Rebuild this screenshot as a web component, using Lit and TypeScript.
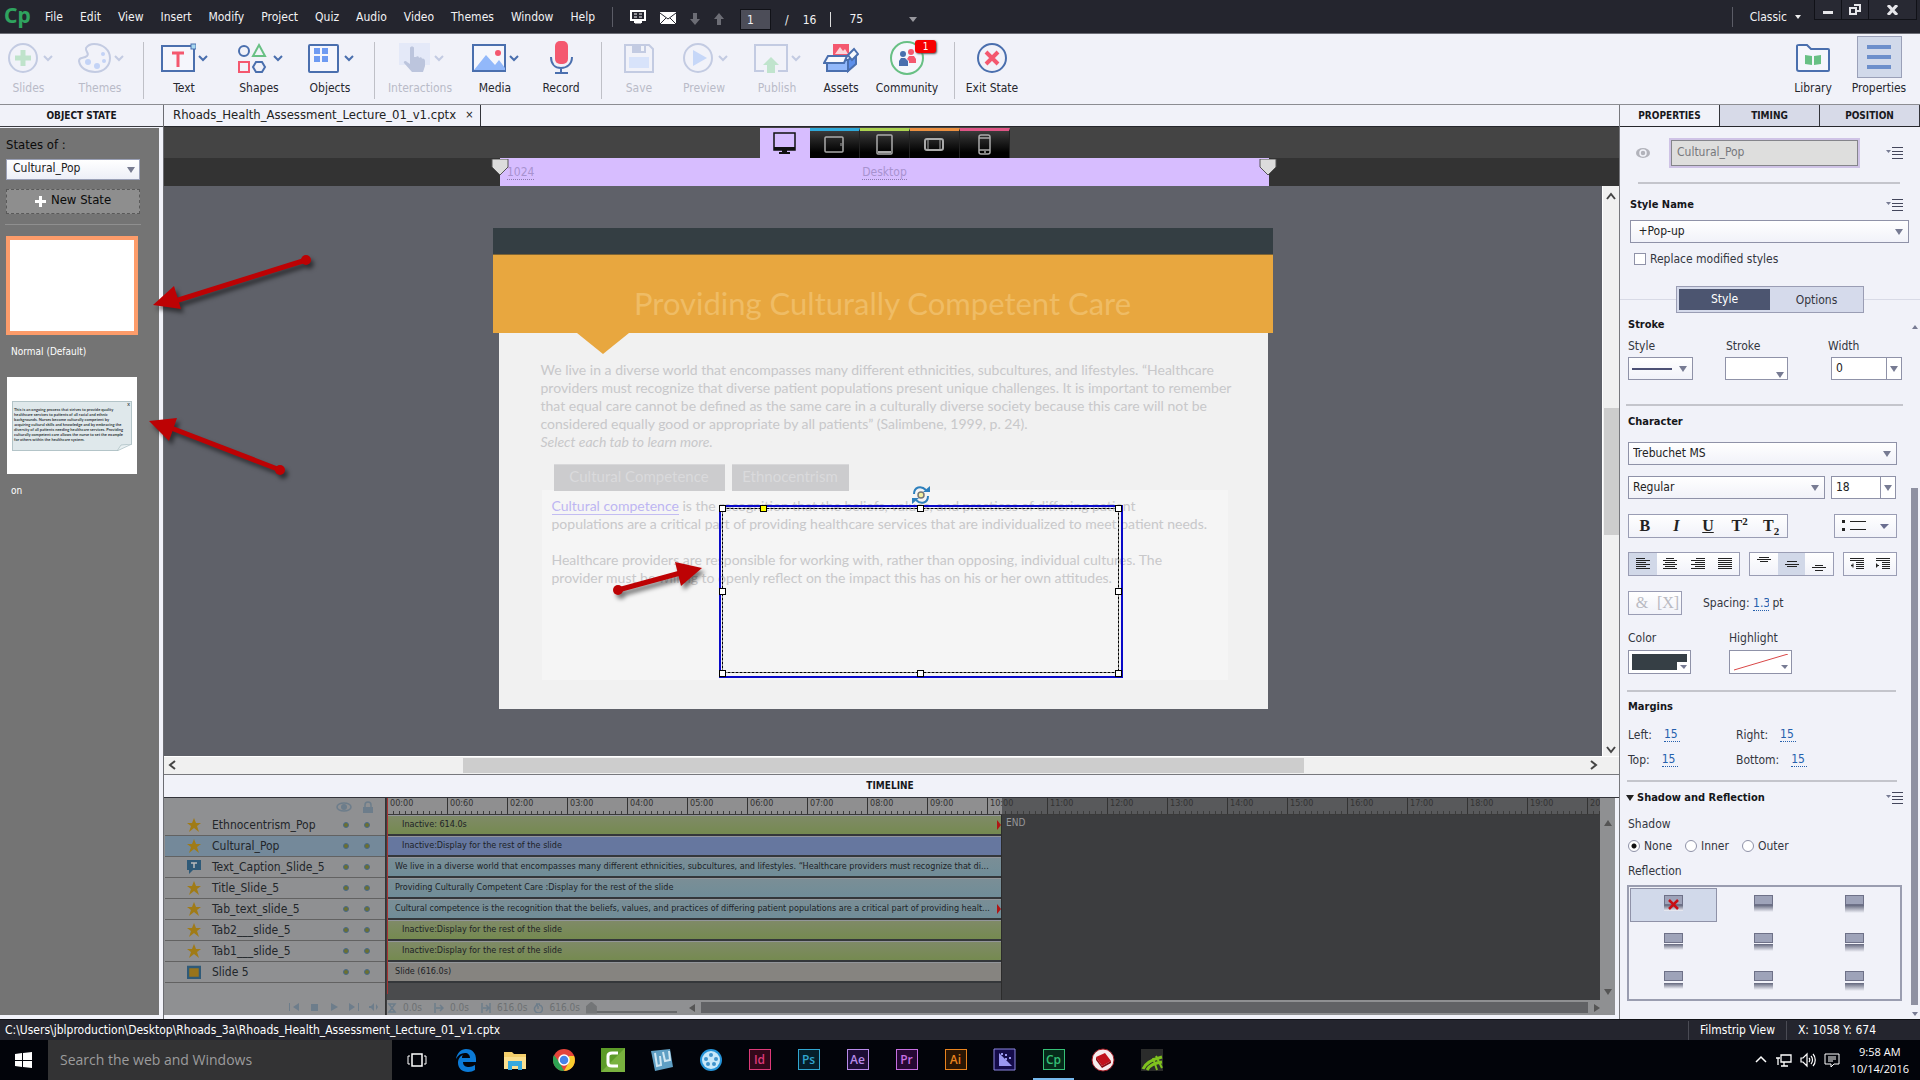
import { LitElement, html, svg, css, nothing } from "lit";
import { customElement } from "lit/decorators.js";
import { classMap } from "lit/directives/class-map.js";

const BLUE = "#4a6fae";
const RED = "#f4586f";
const GREEN = "#68c084";

const icons: Record<string, unknown> = {
  slides: svg`<circle cx="18" cy="18" r="14" fill="none" stroke="#c3cbe2" stroke-width="2"/><path d="M18 10v16M10 18h16" stroke="#bfe3cb" stroke-width="5"/>`,
  themes: svg`<path d="M10 8c-1 4 4 5 1 8-3 3-8 0-8 5 1 7 8 11 16 11 9 0 15-6 15-14S27 4 18 4c-3 0-6 1-8 4z" fill="none" stroke="#c3cbe2" stroke-width="2"/><circle cx="12" cy="22" r="3" fill="#c3d3f6"/><circle cx="21" cy="26" r="3" fill="#c3d3f6"/><circle cx="28" cy="21" r="2" fill="#c3d3f6"/><circle cx="27" cy="14" r="2" fill="#c3d3f6"/>`,
  text: svg`<rect x="2" y="6" width="32" height="25" fill="#f5f6fc" stroke="${BLUE}" stroke-width="2"/><path d="M12 13h12M18 13v14" stroke="${RED}" stroke-width="3" fill="none"/><rect x="31" y="4" width="5" height="5" fill="#a8d8f0" stroke="${BLUE}"/>`,
  shapes: svg`<g fill="none" stroke-width="2"><circle cx="9" cy="11" r="5" stroke="${BLUE}"/><path d="M24 5l6 11H18z" stroke="${GREEN}"/><rect x="4" y="22" width="10" height="10" stroke="${RED}"/><path d="M21 22h6l3 5-3 5h-6l-3-5z" stroke="${BLUE}"/></g>`,
  objects: svg`<rect x="3" y="5" width="29" height="27" rx="1" fill="#f5f6fc" stroke="${BLUE}" stroke-width="2"/><path d="M8 8h6v6H8zM16 8h6v6h-6zM8 16h6v6H8zM16 16h6v6h-6z" fill="#6e9bf2"/>`,
  interactions: svg`<rect x="3" y="3" width="31" height="22" fill="#e4e9f8"/><path d="M14 8c0-2 4-2 4 0v9h2c1-1 3-1 3 1 1-1 3-1 3 1 1-1 3 0 3 2v5l-2 6H16l-8-9c-1-2 2-3 3-1l3 2z" fill="#bcc5dd"/>`,
  media: svg`<rect x="2" y="5" width="32" height="26" fill="#f5f6fc" stroke="${BLUE}" stroke-width="2"/><path d="M3 30l12-15 9 10 4-5 6 8v2z" fill="#92b8fa"/><circle cx="27" cy="13" r="3" fill="${RED}"/>`,
  record: svg`<rect x="12" y="1" width="13" height="23" rx="5" fill="${RED}"/><path d="M8 17c0 7 4 11 10 11s11-4 11-11M18 28v5M12 33h13" fill="none" stroke="${BLUE}" stroke-width="2"/>`,
  save: svg`<path d="M4 5h24l4 4v23H4z" fill="none" stroke="#c3cbe2" stroke-width="2"/><path d="M11 5h14v8H11z" fill="#c3cbe2"/><path d="M20 6h3v5h-3z" fill="#f1f3f9"/><rect x="8" y="17" width="20" height="11" fill="#d8e3fa"/>`,
  preview: svg`<circle cx="18" cy="18" r="14" fill="none" stroke="#c3cbe2" stroke-width="2"/><path d="M13 10l14 8-14 8z" fill="#c6d7f8"/>`,
  publish: svg`<path d="M11 31H2V5h32v26h-9" fill="none" stroke="#c3cbe2" stroke-width="2"/><path d="M18 17l8 8h-4v8h-8v-8h-4z" fill="#c0e4cd"/>`,
  assets: svg`<path d="M10 4h16v13H10z" fill="${RED}"/><path d="M12 14l5-7 3 4 2-2 3 5z" fill="#fbd5db"/><path d="M4 20h21v11H4z" fill="#92b8fa" stroke="${BLUE}" stroke-width="2"/><path d="M25 20l8-6v10l-8 7z" fill="#5d8fea" stroke="${BLUE}" stroke-width="2"/><path d="M1 23l4-7h19l-3 7z" fill="#f8f9fd" stroke="${BLUE}" stroke-width="2"/><path d="M25 15l6-6 4 5-6 6z" fill="#f8f9fd" stroke="${BLUE}" stroke-width="2"/>`,
  community: svg`<circle cx="18" cy="18" r="16" fill="#f5f6fc" stroke="${GREEN}" stroke-width="2"/><circle cx="14" cy="14" r="3" fill="${BLUE}"/><path d="M10 26v-5l2-3h4l3 3v5z" fill="${BLUE}"/><circle cx="22" cy="12" r="3" fill="${RED}"/><path d="M20 23v-2l-2-2 2-3h5l2 3v4z" fill="${RED}"/>`,
  exit: svg`<circle cx="18" cy="18" r="14" fill="none" stroke="${BLUE}" stroke-width="2"/><path d="M12 12l12 12M24 12L12 24" stroke="${RED}" stroke-width="4"/>`,
  library: svg`<path d="M2 6c0-1 1-1 2-1h8l4 4h17c1 0 1 1 1 1v20c0 1 0 1-1 1H4c-2 0-2-1-2-2z" fill="#f5f6fc" stroke="${BLUE}" stroke-width="2"/><path d="M10 15l7 1v9l-7-1zM26 15l-7 1v9l7-1z" fill="${GREEN}"/>`,
  properties: svg`<path d="M6 8h24M6 18h24M6 28h24" stroke="#6d8fcb" stroke-width="4"/>`,
};

interface Tool { icon: string; label: string; width: number; menu?: boolean; off?: boolean; badge?: string }
const toolGroups: Tool[][] = [
  [
    { icon: "slides", label: "Slides", width: 57, menu: true, off: true },
    { icon: "themes", label: "Themes", width: 86, menu: true, off: true },
  ],
  [
    { icon: "text", label: "Text", width: 80, menu: true },
    { icon: "shapes", label: "Shapes", width: 70, menu: true },
    { icon: "objects", label: "Objects", width: 72, menu: true },
  ],
  [
    { icon: "interactions", label: "Interactions", width: 90, menu: true, off: true },
    { icon: "media", label: "Media", width: 60, menu: true },
    { icon: "record", label: "Record", width: 72 },
  ],
  [
    { icon: "save", label: "Save", width: 74, off: true },
    { icon: "preview", label: "Preview", width: 56, menu: true, off: true },
    { icon: "publish", label: "Publish", width: 90, menu: true, off: true },
    { icon: "assets", label: "Assets", width: 38 },
    { icon: "community", label: "Community", width: 94, badge: "1" },
  ],
  [{ icon: "exit", label: "Exit State", width: 74 }],
];

const chevron = html`<svg class="chev" width="10" height="8" viewBox="0 0 10 8"><path d="M1 2l4 4 4-4" fill="none" stroke="currentColor" stroke-width="2"/></svg>`;

const baseStyles = css`
  * { box-sizing: border-box; }
  button, input, select { font: inherit; color: inherit; margin: 0; padding: 0; border: 0; background: none; border-radius: 0; outline: none; text-align: inherit; }
  button { text-align: center; }
  select { appearance: none; width: 100%; height: 100%; }
  svg { display: block; flex: none; }
  a { color: inherit; text-decoration: none; }
`;

@customElement("cp-menubar")
class CpMenubar extends LitElement {
  static styles = [baseStyles, css`
    :host { display: flex; align-items: center; height: 34px; background: #24252e; color: #f2f2f4; border-bottom: 1px solid #6d6e76; position: relative; }
    .logo { width: 40px; padding-left: 4px; font: 700 21px/28px "Noto Sans", "Open Sans", sans-serif; color: #2fa35f; padding-bottom: 4px; }
    .menus { display: flex; gap: 17px; padding-left: 5px; }
    .sep { width: 1px; height: 20px; background: #5b5c66; margin: 0 17px; }
    .tools { display: flex; align-items: center; gap: 14px; }
    .page { width: 31px; height: 21px; background: #4c4d58; border: 1px solid #111218; padding-left: 6px; margin: 6px 0 0 2px; }
    .count { display: flex; gap: 14px; margin: 6px 0 0; }
    .bar { width: 1px; height: 15px; background: #ddd; margin: 6px 4px 0 0; }
    .zoom { width: 70px; height: 20px; margin-top: 5px; position: relative; }
    .zoom::after, .caret { content: ""; border: 4px solid transparent; border-top: 5px solid #98989e; border-bottom: 0; }
    .zoom::after { position: absolute; right: 2px; top: 8px; pointer-events: none; }
    .grow { flex: 1; }
    .mode { display: flex; align-items: center; gap: 8px; padding-right: 13px; }
    .caret { border-top-color: #eee; border-width: 4px 3px 0; }
    .win { display: flex; align-self: flex-start; height: 20px; border: 1px solid #101117; border-top: 0; margin-right: 3px; background: #282933; }
    .win button { width: 27px; display: grid; place-items: center; border-right: 1px solid #101117; }
    .win button:last-child { width: 47px; border: 0; }
  `];
  render() {
    const menus = ["File", "Edit", "View", "Insert", "Modify", "Project", "Quiz", "Audio", "Video", "Themes", "Window", "Help"];
    return html`
      <div class="logo">Cp</div>
      <nav class="menus">${menus.map((m) => html`<button>${m}</button>`)}</nav>
      <span class="sep"></span>
      <div class="tools">
        <button aria-label="Preview device"><svg width="16" height="14" viewBox="0 0 16 14"><path d="M1 1h14v9H1z" fill="none" stroke="#fff" stroke-width="2"/><path d="M4 4h3M9 4h3M4 7h3M9 7h3M5 13h6" stroke="#fff" stroke-width="1"/><path d="M4 10h8v3H4z" fill="#fff"/></svg></button>
        <button aria-label="Mail"><svg width="16" height="14" viewBox="0 0 16 14"><path d="M0 2h16v12H0z" fill="#fff"/><path d="M0 3l8 6 8-6M0 14l6-6M16 14l-6-6" fill="none" stroke="#24252e"/></svg></button>
        <button aria-label="Next slide"><svg width="10" height="16" viewBox="0 0 10 16"><path d="M3 4h4v6h3l-5 6-5-6h3z" fill="#6c6d75"/></svg></button>
        <button aria-label="Previous slide"><svg width="10" height="16" viewBox="0 0 10 16"><path d="M3 16h4v-6h3L5 4l-5 6h3z" fill="#6c6d75"/></svg></button>
        <input class="page" aria-label="Slide number" value="1">
        <span class="count"><span>/</span><span>16</span></span>
        <span class="bar"></span>
        <div class="zoom"><select aria-label="Zoom"><option>75</option></select></div>
      </div>
      <span class="grow"></span>
      <span class="sep"></span>
      <button class="mode">Classic <span class="caret"></span></button>
      <div class="win">
        <button aria-label="Minimize"><svg width="10" height="10" viewBox="0 0 10 10"><path d="M0 6h10v3H0z" fill="#e6e6ea"/></svg></button>
        <button aria-label="Restore"><svg width="12" height="11" viewBox="0 0 12 11"><path d="M5 1h6v6H8M1 4h6v6H1z" fill="none" stroke="#e6e6ea" stroke-width="2"/></svg></button>
        <button aria-label="Close"><svg width="11" height="10" viewBox="0 0 11 10"><path d="M1 0l9 10M10 0L1 10" stroke="#e6e6ea" stroke-width="3"/></svg></button>
      </div>`;
  }
}

@customElement("cp-toolbar")
class CpToolbar extends LitElement {
  static styles = [baseStyles, css`
    :host { display: flex; height: 71px; background: #f1f2f9; border-bottom: 1px solid #8c8d92; color: #26272e; padding-top: 6px; }
    .group { display: flex; margin: 2px 0 5px; }
    .group + .group { border-left: 1px solid #bfc0c7; }
    .group:nth-child(2) { padding-right: 8px; }
    .group:nth-child(3) { padding-right: 4px; }
    .tool { display: flex; flex-direction: column; align-items: center; height: 56px; white-space: nowrap; padding: 0; position: relative; }
    .icon { display: flex; align-items: center; justify-content: center; gap: 2px; height: 36px; margin-bottom: 4px; margin-top: -2px; }
    .chev { color: #4a6fae; }
    .label { line-height: 16px; }
    .off { color: #b9bbc8; }
    .off .chev { color: #c3cbe2; }
    .grow { flex: 1; }
    .wide { width: 66px; }
    .right { padding-right: 8px; }
    .group.right { border: 0; }
    .sel .icon { background: #d1d9ea; border: 1px solid #9aa0b8; width: 45px; height: 42px; margin: -6px 0 2px; }
    .badge { position: absolute; right: 18px; top: -2px; width: 21px; height: 13px; border-radius: 3px; background: #f70000; color: #fff; font-size: 10px; line-height: 13px; box-shadow: 1px 1px 2px #555; }
  `];
  icon(name: string) {
    return html`<svg width="36" height="36" viewBox="0 0 36 36">${icons[name]}</svg>`;
  }
  render() {
    return html`
      ${toolGroups.map((g) => html`<div class="group">${g.map((t) => html`
        <button class=${classMap({ tool: true, off: !!t.off })} style="width:${t.width}px">
          <span class="icon">${this.icon(t.icon)}${t.menu ? chevron : nothing}</span>
          <span class="label">${t.label}</span>
          ${t.badge ? html`<span class="badge">${t.badge}</span>` : nothing}
        </button>`)}</div>`)}
      <span class="grow"></span>
      <div class="group right">
        <button class="tool wide"><span class="icon">${this.icon("library")}</span><span class="label">Library</span></button>
        <button class="tool wide sel"><span class="icon">${this.icon("properties")}</span><span class="label">Properties</span></button>
      </div>`;
  }
}

@customElement("cp-states")
class CpStates extends LitElement {
  static styles = [baseStyles, css`
    :host { display: flex; flex-direction: column; width: 164px; border-right: 1px solid #6b6c72; background: #f1f2f9; position: relative; }
    .head { height: 22px; font-weight: 700; font-size: 10px; line-height: 21px; text-align: center; color: #17181c; border-bottom: 1px solid #3b3c42; margin-bottom: 1px; }
    .body { flex: 1; margin: 0 4px 4px 0; background: #747474; padding: 6px 0 0 6px; color: #0b0b0b; }
    .of { line-height: 22px; display: block; font-size: 13px; }
    .pick { position: relative; width: 134px; height: 21px; margin-top: 3px; background: linear-gradient(#fff, #edeff7); border: 1px solid #9aa0b6; color: #222; }
    .pick select { padding: 0 0 3px 6px; }
    .pick::after { content: ""; position: absolute; right: 4px; top: 7px; border: 4px solid transparent; border-top: 6px solid #777b90; border-bottom: 0; pointer-events: none; }
    .new { display: flex; width: 134px; height: 25px; margin-top: 9px; align-items: center; justify-content: center; gap: 5px; background: #8e8e8e; border: 1px dashed #5a5a5a; font-size: 13px; line-height: 20px; padding-bottom: 3px; }
    .new svg { margin-top: 3px; }
    .rule { width: 136px; height: 1px; background: #8f8f8f; margin: 10px 0 11px -1px; }
    .thumb { display: block; width: 132px; height: 99px; background: #fff; border: 4px solid #fd9c6a; }
    .plain { width: 130px; height: 97px; border: 0; margin: 18px 0 0 1px; padding: 23px 5px; text-align: left; }
    .note { display: block; position: relative; height: 50px; background: #dfe8eb; border: 1px solid #b3c4c8; padding: 5px 1px; font: 700 4px/5px Lato, sans-serif; color: #33393d; white-space: nowrap; }
    .note i { position: absolute; right: 1px; top: 0; font-style: normal; }
    .note svg { position: absolute; right: -1px; bottom: -1px; }
    .cap { display: block; font-size: 10px; line-height: 14px; color: #fff; padding-left: 5px; margin-top: 10px; }
    .arrow { position: absolute; z-index: 3; pointer-events: none; filter: drop-shadow(3px 4px 2px rgba(0, 0, 0, .5)); }
    .a1 { left: 150px; top: 148px; }
    .a2 { left: 146px; top: 310px; }
  `];
  render() {
    const lines = ["This is an ongoing process that strives to provide quality", "healthcare services to patients of all racial and ethnic", "backgrounds. Nurses become culturally competent by", "acquiring cultural skills and knowledge and by embracing the", "diversity of all patients needing healthcare services. Providing", "culturally competent care allows the nurse to set the example", "for others within the healthcare system."];
    return html`
      <div class="head">OBJECT STATE</div>
      <div class="body">
        <label class="of" for="state">States of :</label>
        <div class="pick"><select id="state"><option>Cultural_Pop</option></select></div>
        <button class="new"><svg width="11" height="11" viewBox="0 0 11 11"><path d="M4 0h3v4h4v3H7v4H4V7H0V4h4z" fill="#fff"/></svg>New State</button>
        <div class="rule"></div>
        <button class="thumb" aria-label="Normal state"></button>
        <span class="cap">Normal (Default)</span>
        <button class="thumb plain" aria-label="on state"><span class="note">${lines.map((l) => html`${l}<br>`)}<i>X</i><svg width="15" height="7" viewBox="0 0 15 7"><path d="M0 7L15 0v7z" fill="#fff"/><path d="M0 7l4-6 11-1z" fill="#e9f0f2" stroke="#9fb6bb" stroke-width=".6"/></svg></span></button>
        <span class="cap">on</span>
      </div>
      <svg class="arrow a1" width="170" height="70" viewBox="0 0 170 70"><path d="M22 49L156 7" stroke="#bd0204" stroke-width="5"/><path d="M3 52L24 33 31 56z" fill="#bd0204"/><circle cx="156" cy="7" r="5" fill="#bd0204"/></svg>
      <svg class="arrow a2" width="150" height="70" viewBox="0 0 150 70"><path d="M20 11L134 55" stroke="#bd0204" stroke-width="5"/><path d="M3 6L31 3 23 26z" fill="#bd0204"/><circle cx="134" cy="55" r="5" fill="#bd0204"/></svg>`;
  }
}

@customElement("cp-stage")
class CpStage extends LitElement {
  static styles = [baseStyles, css`
    :host { display: flex; flex-direction: column; flex: 1; min-height: 0; }
    .tabs { display: flex; height: 22px; background: #f1f2f9; border-bottom: 1px solid #26272c; color: #222; }
    .doc { display: flex; align-items: center; gap: 9px; padding: 0 7px 2px 9px; border-right: 1px solid #33343a; font-size: 13px; }
    .doc button { font-size: 11px; }
    .devices { display: flex; justify-content: center; height: 31px; padding: 1px 14px 0 0; background: #444; }
    .devices button { width: 50px; display: grid; place-items: center; background: linear-gradient(#3a3a3a, #000 80%); border-top: 3px solid; border-right: 1px solid #222; }
    .devices .d0 { background: #d7bdff; border: 0; }
    .devices .d1 { border-top-color: #2fa9da; } .devices .d2 { border-top-color: #acd350; } .devices .d3 { border-top-color: #ec9040; } .devices .d4 { border-top-color: #df5686; }
    .ruler { height: 28px; background: #333; display: flex; justify-content: center; padding-right: 14px; }
    .band { width: 769px; background: #d7bdff; position: relative; display: grid; grid-template-columns: 1fr auto 1fr; align-items: center; color: #a892cf; padding: 0 7px; font-size: 12px; }
    .band span { border-bottom: 1px dotted #8d7ab0; justify-self: start; line-height: 14px; }
    .band svg { position: absolute; top: 1px; left: -9px; }
    .band svg.r { left: auto; right: -8px; }
    .work { flex: 1; display: grid; grid-template: 1fr 18px / 1fr 17px; min-height: 0; background: #f0f0f0; }
    .canvas { background: #5f6169; display: flex; justify-content: center; align-items: flex-start; padding-top: 42px; overflow: hidden; }
    .v { border-left: 1px solid #fff; display: flex; flex-direction: column; align-items: center; padding: 5px 0 1px; }
    .v i { width: 15px; height: 127px; background: #cdcdcd; margin: 0 0 209px; }
    .v .gap, .h .gap { flex: 1; }
    .h { grid-column: 1 / -1; border-top: 1px solid #fff; display: flex; align-items: center; padding: 0 20px 0 3px; }
    .h i { width: 841px; height: 15px; background: #cdcdcd; margin-right: 284px; }
    .slide { position: relative; width: 769px; height: 481px; background: #f1f1f1; font-family: "Trebuchet MS", Lato, "Open Sans", sans-serif; color: #c8c8ca; font-size: 14px; line-height: 18px; }
    .slide > * { position: absolute; }
    .top { left: -6px; right: -5px; top: 0; height: 27px; background: #343e43; border-bottom: 1px solid #7e6434; }
    .title { left: -6px; right: -5px; top: 27px; height: 78px; background: #e8a73f; color: #efbc65; font-size: 31px; line-height: 96px; text-align: center; white-space: nowrap; }
    .tip { left: 78px; top: 105px; border: 26px solid transparent; border-top: 21px solid #e8a73f; border-bottom: 0; }
    .para { left: 42px; top: 133px; white-space: nowrap; }
    .panel { left: 43px; top: 262px; width: 686px; height: 190px; background: #f5f5f5; }
    .tab { top: 236px; height: 27px; background: #ccccce; color: #dadadc; font-size: 15px; border-top: 1px solid #d8d8da; padding-bottom: 4px; }
    .t1 { left: 55px; width: 171px; } .t2 { left: 233px; width: 117px; }
    .copy { left: 53px; top: 269px; white-space: nowrap; }
    .copy a { color: #bdb6f2; border-bottom: 1px solid #c3bdf2; }
    .sel { left: 220px; top: 276px; overflow: visible; }
    .arrow { left: 110px; top: 334px; filter: drop-shadow(3px 4px 2px rgba(0, 0, 0, .5)); overflow: visible; }
  `];
  render() {
    const copy1 = ["We live in a diverse world that encompasses many different ethnicities, subcultures, and lifestyles. “Healthcare", "providers must recognize that diverse patient populations present unique challenges. It is important to remember", "that equal care cannot be defined as the same care in a culturally diverse society because this care will not be", "considered equally good or appropriate by all patients” (Salimbene, 1999, p. 24)."];
    const handles = [[1, 1], [199, 1], [397, 1], [1, 84], [397, 84], [1, 166], [199, 166], [397, 166]];
    const device = [
      svg`<path d="M1 1h21v17H1z" fill="none" stroke="#111" stroke-width="1.5"/><path d="M1 15h21v3H1zM9 18h5v3H9zM6 20h11v2H6z" fill="#111"/>`,
      svg`<rect x="2" y="4" width="18" height="15" rx="1" fill="none" stroke="#aaa" stroke-width="1.5"/><path d="M18 10v3" stroke="#aaa"/>`,
      svg`<rect x="4" y="2" width="15" height="19" rx="1" fill="none" stroke="#aaa" stroke-width="1.5"/><path d="M5 18h13v2H5z" fill="#aaa"/>`,
      svg`<rect x="2" y="6" width="18" height="11" rx="2" fill="none" stroke="#aaa" stroke-width="2"/><path d="M5 6v11M17 6v11" stroke="#aaa"/>`,
      svg`<rect x="6" y="2" width="11" height="19" rx="2" fill="none" stroke="#aaa" stroke-width="1.5"/><path d="M6 5h11M6 17h11M11 19h2" stroke="#aaa" stroke-width="1.5"/>`,
    ];
    const names = ["Desktop", "Tablet landscape", "Tablet portrait", "Mobile landscape", "Mobile portrait"];
    const marker = svg`<path d="M1 0h16v8l-8 8-8-8z" fill="#dcdcdc" stroke="#555"/>`;
    const arr = (d: string) => html`<svg width="11" height="11" viewBox="0 0 11 11"><path d=${d} fill="none" stroke="#444" stroke-width="2"/></svg>`;
    return html`
      <div class="tabs"><div class="doc"><span>Rhoads_Health_Assessment_Lecture_01_v1.cptx</span><button aria-label="Close document">×</button></div></div>
      <div class="devices">${device.map((d, i) => html`<button class="d${i}" aria-label=${names[i]}><svg width="23" height="23" viewBox="0 0 23 23">${d}</svg></button>`)}</div>
      <div class="ruler"><div class="band">
        <span>1024</span><span>Desktop</span>
        <svg width="18" height="17">${marker}</svg><svg class="r" width="18" height="17">${marker}</svg>
      </div></div>
      <div class="work">
        <div class="canvas">
          <div class="slide">
            <div class="top"></div>
            <div class="title">Providing Culturally Competent Care</div>
            <div class="tip"></div>
            <div class="para">${copy1.map((l) => html`${l}<br>`)}<em>Select each tab to learn more.</em></div>
            <div class="panel"></div>
            <button class="tab t1">Cultural Competence</button><button class="tab t2">Ethnocentrism</button>
            <div class="copy"><a href="#competence">Cultural competence</a> is the recognition that the beliefs, values, and practices of differing patient<br>populations are a critical part of providing healthcare services that are individualized to meet patient needs.<br><br>Healthcare providers are responsible for working with, rather than opposing, individual cultures. The<br>provider must be willing to openly reflect on the impact this has on his or her own attitudes.</div>
            <svg class="sel" width="406" height="175" viewBox="0 0 406 175">
              <rect x="1" y="2" width="402" height="171" fill="none" stroke="#0a0ac8" stroke-width="2"/>
              <rect x="3.5" y="4.5" width="396" height="164" fill="none" stroke="#000" stroke-dasharray="3 1"/>
              ${handles.map(([x, y]) => svg`<rect x=${x - 0.5} y=${y + 0.5} width="6" height="6" fill="#fff" stroke="#000"/>`)}
              <rect x="41.5" y="1.5" width="6" height="6" fill="#ff0" stroke="#000"/>
              <g fill="none" stroke="#2e80bd" stroke-width="2"><circle cx="202" cy="-9" r="3" fill="#f4f0a0" stroke="#777" stroke-width="1.5"/><path d="M195-10c0-7 7-9 12-4M209-8c0 7-7 9-12 4"/></g>
              <path d="M204-12h7v-6zM200-6h-7v6z" fill="#2e80bd"/>
            </svg>
            <svg class="arrow" width="110" height="45" viewBox="0 0 110 45"><path d="M9 28L75 10" stroke="#bd0204" stroke-width="5"/><path d="M93 6L66 0 72 24z" fill="#bd0204"/><circle cx="9" cy="28" r="5" fill="#bd0204"/></svg>
          </div>
        </div>
        <div class="v">${arr("M1 8l4-5 4 5")}<span class="gap"></span><i></i>${arr("M1 3l4 5 4-5")}</div>
        <div class="h">${arr("M8 1L3 5l5 4")}<span class="gap"></span><i></i>${arr("M3 1l5 4-5 4")}</div>
      </div>`;
  }
}

interface Track { name: string; kind: string; icon: string; text: string; wide?: boolean; flag?: boolean; on?: boolean }
const tracks: Track[] = [
  { name: "Ethnocentrism_Pop", kind: "green", icon: "star", text: "Inactive: 614.0s", wide: true, flag: true },
  { name: "Cultural_Pop", kind: "violet", icon: "star", text: "Inactive:Display for the rest of the slide", wide: true, on: true },
  { name: "Text_Caption_Slide_5", kind: "teal", icon: "cap", text: "We live in a diverse world that encompasses many different ethnicities, subcultures, and lifestyles. “Healthcare providers must recognize that di..." },
  { name: "Title_Slide_5", kind: "teal", icon: "star", text: "Providing Culturally Competent Care :Display for the rest of the slide" },
  { name: "Tab_text_slide_5", kind: "teal", icon: "star", text: "Cultural competence is the recognition that the beliefs, values, and practices of differing patient populations are a critical part of providing healt...", flag: true },
  { name: "Tab2___slide_5", kind: "green", icon: "star", text: "Inactive:Display for the rest of the slide", wide: true },
  { name: "Tab1___slide_5", kind: "green", icon: "star", text: "Inactive:Display for the rest of the slide", wide: true },
  { name: "Slide 5", kind: "grey", icon: "slide", text: "Slide (616.0s)" },
];

@customElement("cp-timeline")
class CpTimeline extends LitElement {
  static styles = [baseStyles, css`
    :host { display: flex; flex-direction: column; height: 245px; border-top: 1px solid #77787d; background: #f1f2f9; }
    .head { height: 23px; line-height: 22px; text-align: center; font-size: 10px; font-weight: 700; color: #17181c; border-bottom: 1px solid #33343a; padding-right: 3px; }
    .body { display: grid; grid-template-columns: 222px 1fr 15px; height: 217px; margin: 0 4px 0 0; background: #8f9092; }
    .names { display: flex; flex-direction: column; padding-left: 1px; color: #22262a; border-right: 1px solid #333; }
    .cols { height: 17px; display: flex; gap: 11px; padding: 3px 12px 0 0; justify-content: flex-end; }
    .name { display: flex; align-items: center; height: 21px; border-bottom: 1px solid #626262; padding: 0 15px 0 22px; }
    .name.on { background: #74899a; }
    .name b { font-weight: 400; flex: 1; padding-left: 11px; line-height: 19px; white-space: nowrap; }
    .dot { flex: none; width: 6px; height: 6px; border-radius: 3px; background: #6c702f; border: 1px solid #47698a; margin-left: 15px; }
    .play { display: flex; flex: 1; align-items: center; justify-content: flex-end; gap: 8px; padding: 16px 5px 0 0; }
    .lanes { min-width: 0; overflow: hidden; background: #3c3d3f; display: flex; flex-direction: column; position: relative; padding-left: 1px; }
    .ruler { display: flex; height: 17px; overflow: hidden; background: linear-gradient(90deg, #8f8f90 615px, #58595b 615px); border-bottom: 1px solid #3a3a3a; font-size: 9px; color: #333; }
    .mark { flex: 0 0 60px; line-height: 11px; padding-left: 2px; border-left: 1px solid #333; background: repeating-linear-gradient(90deg, transparent 0 5px, #3c3c3c 5px 6px) 0 13px / 100% 4px no-repeat; }
    .mark:first-child { border-left-color: #b52a2a; }
    .bars { width: 615px; flex: 1; background: #4a4b4d; border-right: 1px solid #2c2c2c; }
    .bar { height: 21px; border-bottom: 2px solid #34373a; border-top: 1px solid #93969a; padding: 0 10px 0 8px; font-size: 9px; line-height: 17px; color: #1c2226; white-space: nowrap; position: relative; overflow: hidden; }
    .wide { padding-left: 15px; }
    .green { background: linear-gradient(#7f8a67, #758a50); }
    .violet { background: #66779f; }
    .teal { background: linear-gradient(#7a8e96, #708d98); }
    .grey { background: #868480; }
    .flag { position: absolute; right: 0; top: 4px; border: 5px solid transparent; border-left: 4px solid #b01515; border-right: 0; }
    .end { position: absolute; left: 620px; top: 18px; color: #96979a; font-size: 10px; line-height: 14px; }
    .head-line { position: absolute; left: 1px; top: 0; width: 1px; height: 196px; background: #a93434; }
    .foot { display: flex; align-items: center; height: 15px; background: #8f9092; font-size: 10px; line-height: 14px; color: #6d7073; gap: 6px; }
    .foot .far { margin-right: 6px; }
    .foot .thumb { flex: 1; height: 11px; background: #616265; }
    .foot input { width: 91px; height: 15px; margin: 0 6px 0 0; appearance: none; background: linear-gradient(#66686a, #66686a) 0 11px / 100% 2px no-repeat; }
    .foot input::-webkit-slider-thumb { appearance: none; width: 11px; height: 12px; background: #737577; clip-path: polygon(50% 0, 100% 40%, 100% 100%, 0 100%, 0 40%); }
    .side { display: flex; flex-direction: column; justify-content: space-between; align-items: center; padding: 22px 0 20px; }
    .tri { border: 4px solid transparent; }
    .up { border-bottom: 6px solid #555; border-top: 0; } .down { border-top: 6px solid #555; border-bottom: 0; }
    .lt { border-right: 6px solid #555; border-left: 0; } .rt { border-left: 6px solid #555; border-right: 0; }
  `];
  rowIcon(kind: string) {
    const star = svg`<path d="M7 0l2 5h5l-4 3 2 6-5-4-5 4 2-6-4-3h5z" fill="#a07b16"/>`;
    const cap = svg`<path d="M0 0h14v10H6l-4 4v-4H0z" fill="#2f5a78"/><path d="M4 3h6M7 3v5" stroke="#bbb" stroke-width="1.5"/>`;
    const slide = svg`<rect x="1" y="2" width="12" height="11" fill="#98741c" stroke="#2f5a78" stroke-width="2.5"/>`;
    return html`<svg width="14" height="14" viewBox="0 0 14 14">${kind === "star" ? star : kind === "cap" ? cap : slide}</svg>`;
  }
  render() {
    const marks = ["00:00", "00:60", "02:00", "03:00", "04:00", "05:00", "06:00", "07:00", "08:00", "09:00", "10:00", "11:00", "12:00", "13:00", "14:00", "15:00", "16:00", "17:00", "18:00", "19:00", "20"];
    const c = "#6d7d8b";
    const play = (n: string, d: string) => html`<button aria-label=${n}><svg width="12" height="10" viewBox="0 0 12 10"><path d=${d} fill=${c}/></svg></button>`;
    const foot = (d: string) => html`<svg width="10" height="10" viewBox="0 0 10 10"><path d=${d} fill="none" stroke=${c} stroke-width="1.5"/></svg>`;
    return html`
      <div class="head">TIMELINE</div>
      <div class="body">
        <div class="names">
          <div class="cols">
            <svg width="16" height="12" viewBox="0 0 16 12"><ellipse cx="8" cy="6" rx="7" ry="4" fill="none" stroke=${c} stroke-width="1.5"/><circle cx="8" cy="6" r="3" fill=${c}/></svg>
            <svg width="10" height="12" viewBox="0 0 10 12"><path d="M2 6V4c0-4 6-4 6 0v2" fill="none" stroke=${c} stroke-width="1.5"/><path d="M0 6h10v6H0z" fill=${c}/></svg>
          </div>
          ${tracks.map((t) => html`<div class=${classMap({ name: true, on: !!t.on })}>${this.rowIcon(t.icon)}<b>${t.name}</b><span class="dot"></span><span class="dot"></span></div>`)}
          <div class="play">${play("Start", "M1 1h1v8H1zM11 1v8L5 5z")}${play("Stop", "M3 2h7v7H3z")}${play("Play", "M3 1v8l7-4z")}${play("End", "M1 1v8l6-4zM10 1h1v8h-1z")}${play("Mute", "M1 4h2l3-3v8L3 6H1zM8 2l2 3-2 3z")}</div>
        </div>
        <div class="lanes">
          <div class="ruler">${marks.map((m) => html`<span class="mark">${m}</span>`)}</div>
          <div class="bars">${tracks.map((t) => html`<div class=${classMap({ bar: true, wide: !!t.wide, [t.kind]: true })}>${t.text}${t.flag ? html`<span class="flag"></span>` : nothing}</div>`)}</div>
          <span class="end">END</span><span class="head-line"></span>
          <div class="foot">
            ${foot("M2 1h6L5 5l3 4H2l3-4z")}<span class="far">0.0s</span>${foot("M1 0v10M2 5h7M6 2l3 3-3 3")}<span class="far">0.0s</span>${foot("M1 0v10M2 5h6M5 2l3 3-3 3M9 0v10")}<span>616.0s</span>${foot("M5 2a4 4 0 1 0 1 0M3 1h4M5 6V3")}<span>616.0s</span>
            <input type="range" aria-label="Timeline zoom" value="0">
            <span class="tri lt"></span><span class="thumb"></span><span class="tri rt"></span>
          </div>
        </div>
        <div class="side"><span class="tri up"></span><span class="tri down"></span></div>
      </div>`;
  }
}

@customElement("cp-properties")
class CpProperties extends LitElement {
  static styles = [baseStyles, css`
    :host { display: flex; flex-direction: column; width: 301px; background: #f1f2f9; border-left: 1px solid #77787d; color: #333640; position: relative; }
    .tabs { display: grid; grid-template-columns: repeat(3, 1fr); height: 22px; border-bottom: 1px solid #26272c; }
    .tabs button { background: #d7dae8; font-weight: 700; font-size: 10px; color: #17181c; border-right: 1px solid #33343a; }
    .tabs .on { background: #f1f2f9; }
    .pad { padding: 0 11px 0 10px; }
    .row { display: flex; align-items: center; }
    .name { height: 51px; padding: 0 6px; }
    .name input { width: 188px; height: 26px; margin: 0 28px 0 21px; background: #dededd; border: 1px solid #85858b; box-shadow: 0 0 0 2px #cfc3e6; padding: 0 0 2px 5px; color: #77787c; }
    hr { border: 0; height: 2px; background: #c4c5cc; margin: 0; }
    .r0 { margin: 4px 9px 0 8px; }
    .r1 { margin: 23px 0 0 -2px; }
    .r2 { margin: 16px 7px 0 -1px; }
    .r3 { margin: 8px 6px 0 -1px; }
    h2 { font-size: 11px; font-weight: 700; margin: 0; color: #15161a; flex: 1; }
    .style { height: 36px; padding: 6px 6px 0 0; }
    .pick { position: relative; height: 23px; border: 1px solid #8f92a8; background: linear-gradient(#fff, #f1f2f9); color: #222; }
    .pick select, .pick input { padding: 0 0 2px 4px; width: 100%; height: 100%; }
    .pick::after { content: ""; position: absolute; right: 5px; top: 8px; border: 4px solid transparent; border-top: 6px solid #777b93; border-bottom: 0; pointer-events: none; }
    .num::before { content: ""; position: absolute; right: 14px; top: 0; bottom: 0; border-left: 1px solid #8f92a8; }
    .num::after { right: 3px; }
    .num { background: #fff; }
    .replace { height: 32px; gap: 4px; padding-left: 4px; }
    .replace input { appearance: none; width: 12px; height: 12px; border: 1px solid #8f92a8; background: #fff; }
    .seg { height: 39px; padding: 11px 0 0 56px; background: linear-gradient(#d8dae6, #d8dae6) 0 24px / 100% 1px no-repeat; }
    .seg div { display: grid; grid-template-columns: 1fr 1fr; width: 188px; height: 27px; border: 1px solid #9a9db4; background: #d5daeb; }
    .seg .on { background: #4c5570; color: #fff; margin: 2px 0 2px 2px; padding-bottom: 2px; }
    .scroll { padding: 0 17px 0 8px; flex: 1; font-size: 12px; }
    .t20 { height: 20px; } .t22 { height: 22px; } .t26 { height: 26px; } .t30 { height: 30px; } .t32 { height: 32px; }
    .labels { display: grid; grid-template-columns: 98px 102px 1fr; height: 20px; align-items: center; }
    .trio { display: grid; grid-template-columns: 97px 106px 71px; align-items: center; height: 25px; }
    .line { width: 65px; }
    .line::before { content: ""; position: absolute; left: 3px; top: 10px; width: 40px; height: 2px; background: #4c5075; }
    .sw::after { top: 14px; right: 3px; }
    .sw { background: #fff; width: 63px; }
    .gap { margin-top: 4px; }
    .fonts { display: grid; grid-template-columns: 197px 65px; gap: 6px; margin-top: 11px; }
    .char { padding-right: 6px; }
    .set { display: flex; border: 1px solid #9a9db4; background: linear-gradient(#fff, #f1f2f9); height: 24px; }
    .set button { flex: 1; display: grid; place-items: center; font-family: "Liberation Serif", serif; font-size: 16px; font-weight: 700; color: #222; line-height: 18px; }
    .set .on { background: #d1d8e8; }
    .set sup, .set sub { font-size: 11px; line-height: 0; }
    .between { display: flex; justify-content: space-between; margin-top: 15px; }
    .between + .between { margin-top: 14px; }
    .five { width: 160px; } .list { width: 63px; } .four { width: 112px; } .three { width: 85px; } .two { width: 54px; }
    .list button { display: flex; align-items: center; justify-content: center; gap: 14px; }
    .amp { margin-top: 15px; gap: 21px; display: flex; align-items: center; }
    .amp .set button { color: #b9bac2; font-weight: 400; }
    .val { color: #2560ad; border-bottom: 1px dotted #2560ad; line-height: 14px; height: 15px; width: 16px; }
    .pair { display: grid; grid-template-columns: 101px 1fr; }
    .plabels { height: 25px; margin-top: 10px; align-items: center; }
    .sws { grid-template-columns: 63px 63px; gap: 38px; }
    .sws button { height: 24px; border: 1px solid #8f92a8; background: #fff; display: grid; place-items: center; }
    .marg { display: grid; grid-template-columns: 108px 1fr; height: 25px; align-items: center; }
    .marg div { display: flex; gap: 12px; align-items: center; }
    .tri { border: 4px solid transparent; border-top: 6px solid #222; border-bottom: 0; margin-right: 3px; margin-left: -2px; }
    .radios { display: flex; height: 24px; align-items: center; }
    .radios label { display: flex; gap: 4px; align-items: center; width: 57px; }
    .radios input { appearance: none; width: 12px; height: 12px; border-radius: 6px; border: 1px solid #8f92a8; background: #fff; }
    .radios input:checked { background: radial-gradient(#111 2px, #fff 3px); }
    .refl { display: grid; grid-template-columns: repeat(3, 1fr); grid-auto-rows: 38px; width: 275px; height: 116px; border: 2px solid #9a9db0; margin: 1px 0 0 -1px; }
    .refl button { display: grid; place-items: start center; padding-top: 8px; }
    .refl .on { background: #d1d9ea; border: 1px solid #8f92a8; margin: 1px 2px 3px 1px; padding-top: 6px; }
    .bar { position: absolute; right: 2px; top: 383px; bottom: 14px; width: 7px; background: #8f91a2; }
    .up, .down { position: absolute; right: 2px; border: 3px solid transparent; }
    .up { top: 220px; border-bottom: 4px solid #777b93; border-top: 0; } .down { bottom: 3px; border-top: 4px solid #777b93; border-bottom: 0; }
  `];
  lines(d: string) {
    return html`<svg width="16" height="14" viewBox="0 0 16 14"><path d=${d} fill="none" stroke="#222"/></svg>`;
  }
  menu() {
    return html`<button aria-label="Panel menu"><svg width="17" height="12" viewBox="0 0 17 12"><path d="M0 3h5l-2.5 3z" fill="#777b93"/><path d="M6 .5h11M6 4.500h11M6 7.500h11M6 11.500h11" stroke="#44475c"/></svg></button>`;
  }
  render() {
    const P = ["M1 1.500h9M1 3.500h14M1 5.500h10M1 7.500h14M1 9.500h10M1 11.500h14", "M4 1.500h8M1 3.500h14M3 5.500h10M1 7.500h14M3 9.500h10M1 11.500h14", "M6 1.500h9M1 3.500h14M5 5.500h10M1 7.500h14M5 9.500h10M1 11.500h14", "M1 1.500h14M1 3.500h14M1 5.500h14M1 7.500h14M1 9.500h14M1 11.500h14"];
    const V = ["M3 .5h10M1 2.500h14M4 4.500h8", "M3 4.500h10M1 7.500h14M3 9.500h10", "M4 8.500h8M1 10.500h14M4 13.500h8"];
    const I = ["M1 1.500h14M1 3.500h14M7 5.500h8M7 7.500h8M7 9.500h8M7 11.500h8M4 6.500v4M3 7.500v2M2 8.500h2", "M1 1.500h14M1 3.500h14M7 5.500h8M7 7.500h8M7 9.500h8M7 11.500h8M1.500 6.500v4M2.500 7.500v2M3 8.500h1"];
    const names = ["left", "center", "right", "justify"];
    return html`
      <div class="tabs"><button class="on">PROPERTIES</button><button>TIMING</button><button>POSITION</button></div>
      <div class="pad">
        <div class="row name">
          <svg width="14" height="10" viewBox="0 0 14 10"><ellipse cx="7" cy="5" rx="7" ry="5" fill="#b2b3bb"/><circle cx="7" cy="5" r="3" fill="none" stroke="#f1f2f9" stroke-width="1.5"/></svg>
          <input aria-label="Object name" value="Cultural_Pop">${this.menu()}
        </div>
        <hr class="r0">
        <div class="row style"><h2>Style Name</h2>${this.menu()}</div>
        <div class="pick"><select aria-label="Style name"><option>&nbsp;+Pop-up</option></select></div>
        <div class="row replace"><input type="checkbox" id="rep"><label for="rep">Replace modified styles</label></div>
      </div>
      <div class="seg"><div><button class="on">Style</button><button>Options</button></div></div>
      <div class="scroll">
        <div class="row t22"><h2>Stroke</h2></div>
        <div class="labels"><label for="ss">Style</label><span>Stroke</span><label for="sw">Width</label></div>
        <div class="trio">
          <div class="pick line"><select id="ss"><option></option></select></div>
          <div class="pick sw"><button aria-label="Stroke colour"></button></div>
          <div class="pick num"><input id="sw" value="0"></div>
        </div>
        <hr class="r1">
        <div class="row t32"><h2>Character</h2></div>
        <div class="char">
          <div class="pick gap"><select aria-label="Font family"><option>Trebuchet MS</option></select></div>
          <div class="fonts"><div class="pick"><select aria-label="Font style"><option>Regular</option></select></div><div class="pick num"><input aria-label="Font size" value="18"></div></div>
          <div class="between">
            <div class="set five"><button>B</button><button><i>I</i></button><button><u>U</u></button><button><span>T<sup>2</sup></span></button><button><span>T<sub>2</sub></span></button></div>
            <div class="set list"><button aria-label="Bullets"><svg width="24" height="12" viewBox="0 0 24 12"><path d="M0 0h3v3H0zM0 8h3v3H0zM8 1h16v1H8zM8 9h16v1H8z" fill="#222"/></svg><svg width="9" height="5" viewBox="0 0 9 5"><path d="M0 0h9L4 5z" fill="#6a6e90"/></svg></button></div>
          </div>
          <div class="between">
            <div class="set four">${P.map((p, i) => html`<button class=${i === 0 ? "on" : ""} aria-label="Align ${names[i]}">${this.lines(p)}</button>`)}</div>
            <div class="set three">${V.map((p, i) => html`<button class=${i === 1 ? "on" : ""} aria-label="Vertical align ${i}">${this.lines(p)}</button>`)}</div>
            <div class="set two">${I.map((p, i) => html`<button aria-label="Indent ${i}">${this.lines(p)}</button>`)}</div>
          </div>
          <div class="amp"><div class="set two"><button>&amp;</button><button>[X]</button></div><label>Spacing: <input class="val" aria-label="Spacing" value="1.3"> pt</label></div>
          <div class="pair plabels"><span>Color</span><span>Highlight</span></div>
          <div class="pair sws">
            <button aria-label="Text colour"><svg width="56" height="17" viewBox="0 0 56 17"><path d="M0 0h55v8H45v8H0z" fill="#363f45"/><path d="M48 11h7l-3 4z" fill="#777b93"/></svg></button>
            <button aria-label="Highlight colour"><svg width="56" height="17" viewBox="0 0 56 17"><path d="M1 16L55 0" stroke="#d94747"/><path d="M48 11h7l-3 4z" fill="#777b93"/></svg></button>
          </div>
        </div>
        <hr class="r2">
        <div class="row t30"><h2>Margins</h2></div>
        <div class="marg"><div><label for="ml">Left:</label><input class="val" id="ml" value="15"></div><div><label for="mr">Right:</label><input class="val" id="mr" value="15"></div></div>
        <div class="marg"><div><label for="mt">Top:</label><input class="val" id="mt" value="15"></div><div><label for="mb">Bottom:</label><input class="val" id="mb" value="15"></div></div>
        <hr class="r3">
        <div class="row t32"><span class="tri"></span><h2>Shadow and Reflection</h2>${this.menu()}</div>
        <div class="row t20">Shadow</div>
        <div class="radios">${["None", "Inner", "Outer"].map((r) => html`<label><input type="radio" name="shadow" ?checked=${r === "None"}>${r}</label>`)}</div>
        <div class="row t26">Reflection</div>
        <div class="refl">${[0, 1, 2, 3, 4, 5, 6, 7, 8].map((i) => {
          const gap = Math.floor(i / 3);
          return html`<button class=${i === 0 ? "on" : ""} aria-label="Reflection ${i}"><svg width="20" height="22" viewBox="0 0 20 22">
            <defs><linearGradient id="g" x1="0" y1="0" x2="0" y2="1"><stop offset="0" stop-color="#62667c"/><stop offset="1" stop-color="#f1f2f9"/></linearGradient></defs>
            <rect x=".5" y=".5" width="18" height="9" fill="#9ea3b9" stroke="#6e7188"/><rect x="0" y=${10 + gap} width="19" height=${6 + (i % 3)} fill="url(#g)"/>
            ${i === 0 ? svg`<path d="M5 5l9 9M14 5l-9 9" stroke="#c80f14" stroke-width="2.5"/>` : nothing}</svg></button>`;
        })}</div>
      </div>
      <span class="up"></span><span class="bar"></span><span class="down"></span>`;
  }
}

@customElement("win-taskbar")
class WinTaskbar extends LitElement {
  static styles = [baseStyles, css`
    :host { display: flex; align-items: stretch; height: 40px; background: #02040a; color: #fff; font-family: "Segoe UI", "Open Sans", sans-serif; }
    .start { width: 48px; display: grid; place-items: center; padding-right: 1px; }
    .search { width: 344px; background: #333334; padding-left: 12px; font-size: 14px; }
    .search::placeholder { color: #9c9c9d; opacity: 1; }
    .apps { display: flex; }
    .apps button { width: 49px; display: grid; place-items: center; border-bottom: 2px solid transparent; padding-top: 1px; }
    .apps .active { border-bottom-color: #76b9ed; width: 41px; margin: 0 4px; }
    .adobe { width: 22px; height: 21px; border: 1px solid; font-size: 12px; line-height: 19px; text-align: center; font-weight: 600; }
    .id { color: #dc3a78; background: #33081a; } .ps { color: #31a6d0; background: #051f2b; } .ae { color: #b78ae8; background: #1c0d35; }
    .pr { color: #c66fe0; background: #260833; } .ai { color: #e8831e; background: #291503; } .cp { color: #35c076; background: #052a1a; }
    .grow { flex: 1; }
    .tray { display: flex; align-items: center; gap: 8px; }
    .clock { font-size: 11px; line-height: 17px; text-align: center; padding: 0 11px 0 3px; }
  `];
  render() {
    const ico = (x: unknown) => html`<svg width="24" height="24" viewBox="0 0 24 24">${x}</svg>`;
    const ad = (c: string, t: string) => html`<span class="adobe ${c}">${t}</span>`;
    const apps: [string, unknown][] = [
      ["Task view", ico(svg`<path d="M7 6h10v12H7z" fill="none" stroke="#fff" stroke-width="1.5"/><path d="M5 8H3v8h2M19 8h2v8h-2" fill="none" stroke="#fff"/>`)],
      ["Edge", ico(svg`<path d="M2 11C3 5 7 1 12 1c7 0 10 5 10 10v3H9c0 4 3 5 6 5 2 0 4-1 6-2v5c-2 1-4 2-7 2-6 0-10-4-10-9 0-4 2-7 5-8-1 1-1 2-1 3h8c0-3-2-5-5-5-4 0-7 2-9 6z" fill="#0b7ad6"/>`)],
      ["Explorer", ico(svg`<path d="M1 4h8l2 2h12v15H1z" fill="#f4cf6b"/><path d="M1 9h22v12H1z" fill="#fbe08f"/><path d="M5 13h14v9h-4v-4H9v4H5z" fill="#36a9de"/>`)],
      ["Chrome", ico(svg`<circle cx="12" cy="12" r="11" fill="#e4443a"/><path d="M2 7l6 8 4 8C5 23 1 18 1 12c0-2 0-3 1-5z" fill="#2da352"/><path d="M22 8c3 7-2 15-10 15l5-9V8z" fill="#f8cd2d"/><circle cx="12" cy="12" r="5" fill="#4683e8" stroke="#fff" stroke-width="1.5"/>`)],
      ["Camtasia", ico(svg`<path d="M0 0h24v24H0z" fill="#5c9b28"/><path d="M0 24L24 0v24z" fill="#79b23f"/><path d="M17 5h-6c-3 0-4 1-4 3v7c0 2 1 3 4 3h6" fill="none" stroke="#fff" stroke-width="3"/>`)],
      ["Library", ico(svg`<path d="M1 3l19-2 3 18-18 4z" fill="#5f9fc4"/><path d="M5 5l2 13 4-1-1-9M13 4l2 9 5-1-1-9" fill="none" stroke="#cfe6f2" stroke-width="2"/>`)],
      ["Movie", ico(svg`<circle cx="12" cy="12" r="11" fill="#2593d8"/><circle cx="12" cy="12" r="9" fill="#c8e8fa"/><g fill="#3f93cc"><circle cx="12" cy="7" r="2"/><circle cx="7" cy="11" r="2"/><circle cx="17" cy="11" r="2"/><circle cx="9" cy="16" r="2"/><circle cx="15" cy="16" r="2"/></g>`)],
      ["InDesign", ad("id", "Id")], ["Photoshop", ad("ps", "Ps")], ["After Effects", ad("ae", "Ae")], ["Premiere", ad("pr", "Pr")], ["Illustrator", ad("ai", "Ai")],
      ["Media Encoder", ico(svg`<path d="M1 1h21v21H1z" fill="#150c4a" stroke="#8c86e2"/><path d="M6 5l13 13H6z" fill="#9a97f0"/><path d="M8 5h2v2H8zM12 6h2v2h-2zM12 10h2v2h-2zM16 9h2v2h-2z" fill="#9a97f0"/>`)],
      ["Captivate", ad("cp", "Cp")],
      ["Reader", ico(svg`<circle cx="12" cy="12" r="11" fill="#f6ecec" stroke="#9c1720"/><path d="M5 9l9-4 6 8-9 5z" fill="#c1121b"/><path d="M5 9l6 9v2l-6-8zM11 18l9-5v2l-9 5z" fill="#8a0b12"/>`)],
      ["Nvidia", ico(svg`<path d="M1 1h22v22H1z" fill="#2b2c2b"/><path d="M3 21c2-5 7-9 19-12M7 22c2-4 6-7 15-8" fill="none" stroke="#7fc21e" stroke-width="3"/><path d="M13 10l4 12M16 8l6 12" stroke="#7fc21e" stroke-width="2"/>`)],
    ];
    return html`
      <button class="start" aria-label="Start"><svg width="17" height="16" viewBox="0 0 17 16"><path d="M0 2l7-1v7H0zM8 1l9-1v8H8zM0 9h7v6l-7-1zM8 9h9v7l-9-1z" fill="#fff"/></svg></button>
      <input class="search" aria-label="Search" placeholder="Search the web and Windows">
      <div class="apps">${apps.map(([n, i]) => html`<button class=${n === "Captivate" ? "active" : ""} aria-label=${n}>${i}</button>`)}</div>
      <span class="grow"></span>
      <div class="tray">
        <svg width="14" height="14" viewBox="0 0 14 14"><path d="M2 9l5-5 5 5" fill="none" stroke="#fff" stroke-width="1.5"/></svg>
        <svg width="16" height="16" viewBox="0 0 16 16"><path d="M5 3h10v7H5zM2 6v7M0 6h4M8 10v4M5 14h7" fill="none" stroke="#fff" stroke-width="1.3"/></svg>
        <svg width="16" height="16" viewBox="0 0 16 16"><path d="M1 6h2l4-4v12l-4-4H1zM9 6c1 1 1 3 0 4M11 4c2 2 2 6 0 8M13 2c3 3 3 9 0 12" fill="none" stroke="#fff" stroke-width="1.2"/></svg>
        <svg width="16" height="16" viewBox="0 0 16 16"><path d="M1 2h14v10h-5l-3 3v-3H1zM4 5h8M4 7h8M4 9h5" fill="none" stroke="#fff"/></svg>
        <div class="clock">9:58 AM<br>10/14/2016</div>
      </div>`;
  }
}

@customElement("app-root")
class AppRoot extends LitElement {
  static styles = [baseStyles, css`
    :host { display: flex; flex-direction: column; min-height: 100vh; background: #f1f2f9; font: 12px/16px Tahoma, "DejaVu Sans Condensed", "Noto Sans", sans-serif; overflow: hidden; }
    .body { flex: 1; display: grid; grid-template-columns: auto minmax(0, 1fr) auto; min-height: 0; }
    .main { display: flex; flex-direction: column; min-height: 0; }
    .status { display: flex; align-items: center; height: 21px; background: #24252e; color: #fff; border-top: 1px solid #101116; padding: 0 44px 0 5px; font-size: 12px; }
    .status span:first-child { flex: 1; }
    .status span + span { border-left: 1px solid #4a4b54; padding-left: 11px; line-height: 19px; }
    .status .film { padding-right: 11px; }
  `];
  render() {
    return html`
      <cp-menubar></cp-menubar>
      <cp-toolbar></cp-toolbar>
      <div class="body">
        <cp-states></cp-states>
        <div class="main"><cp-stage></cp-stage><cp-timeline></cp-timeline></div>
        <cp-properties></cp-properties>
      </div>
      <div class="status"><span>C:\\Users\\jblproduction\\Desktop\\Rhoads_3a\\Rhoads_Health_Assessment_Lecture_01_v1.cptx</span><span class="film">Filmstrip View</span><span>X: 1058 Y: 674</span></div>
      <win-taskbar></win-taskbar>`;
  }
}
